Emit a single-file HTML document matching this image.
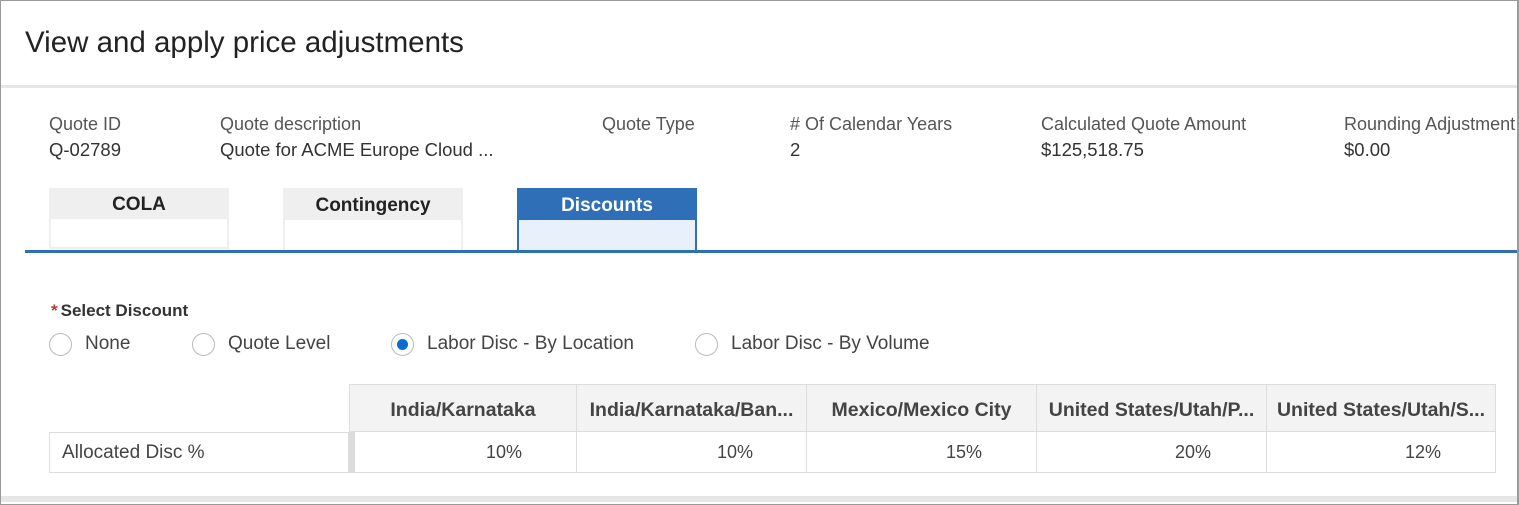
<!DOCTYPE html>
<html><head><style>
*{margin:0;padding:0;box-sizing:border-box}
body{width:1519px;height:505px;overflow:hidden;background:#fff;font-family:"Liberation Sans",sans-serif;color:#333;position:relative}
.a{position:absolute;white-space:nowrap}
.frame{position:absolute;left:0;top:0;width:1519px;height:505px;border:1px solid #9a9a9a;border-right:2px solid #9a9a9a;}
.lbl{font-size:18px;color:#555;top:114px}
.val{font-size:18.5px;color:#333;top:139px}
.tab{position:absolute;top:188px;width:180px;height:62px;background:#efefef;}
.tab .b{position:absolute;left:2px;right:2px;top:31px;bottom:0;background:#fff}
.tab .t{position:absolute;left:0;right:0;top:7px;text-align:center;font-weight:bold;font-size:19px;color:#222}
.radio{position:absolute;top:333px;width:23px;height:23px;border:1px solid #bbb;border-radius:50%;background:#fff}
.rl{font-size:19px;color:#444;top:333px}
.th{position:absolute;top:384px;height:48px;background:#f3f3f3;border:1px solid #ddd;border-left:none;font-weight:bold;font-size:19.5px;color:#444;text-align:center;line-height:50px;overflow:hidden}
.td{position:absolute;top:432px;height:41px;border:1px solid #ddd;border-left:none;border-top:none;font-size:18px;color:#444;line-height:41px}
</style></head><body>
<div class="a" style="left:25px;top:26px;font-size:29.5px;color:#222">View and apply price adjustments</div>
<div class="a" style="left:1px;top:85px;width:1516px;height:3px;background:#e6e6e6"></div>

<div class="a lbl" style="left:49px">Quote ID</div>
<div class="a val" style="left:49px">Q-02789</div>
<div class="a lbl" style="left:220px">Quote description</div>
<div class="a val" style="left:220px">Quote for ACME Europe Cloud ...</div>
<div class="a lbl" style="left:602px">Quote Type</div>
<div class="a lbl" style="left:790px"># Of Calendar Years</div>
<div class="a val" style="left:790px">2</div>
<div class="a lbl" style="left:1041px">Calculated Quote Amount</div>
<div class="a val" style="left:1041px">$125,518.75</div>
<div class="a lbl" style="left:1344px">Rounding Adjustment</div>
<div class="a val" style="left:1344px">$0.00</div>

<div class="tab" style="left:49px;height:61px"><div class="b" style="bottom:2px"></div><div class="t" style="top:6px">COLA</div></div>
<div class="tab" style="left:283px"><div class="b" style="top:32px"></div><div class="t">Contingency</div></div>
<div class="tab" style="left:517px;background:#2e6fb7"><div class="b" style="background:#e8f1fb;top:32px"></div><div class="t" style="color:#fff">Discounts</div></div>
<div class="a" style="left:25px;top:250px;width:1494px;height:3px;background:#2e6fb7"></div>

<div class="a" style="left:51px;top:301px;font-size:17px;font-weight:bold;color:#333"><span style="color:#c23934;margin-right:3px">*</span>Select Discount</div>
<div class="radio" style="left:49px"></div><div class="a rl" style="left:85px">None</div>
<div class="radio" style="left:192px"></div><div class="a rl" style="left:228px">Quote Level</div>
<div class="radio" style="left:391px"><div style="position:absolute;left:5px;top:5px;width:11px;height:11px;border-radius:50%;background:#0b6bd1"></div></div><div class="a rl" style="left:427px">Labor Disc - By Location</div>
<div class="radio" style="left:695px"></div><div class="a rl" style="left:731px">Labor Disc - By Volume</div>

<div class="th" style="left:349px;width:228px;border-left:1px solid #ddd">India/Karnataka</div>
<div class="th" style="left:577px;width:230px">India/Karnataka/Ban...</div>
<div class="th" style="left:807px;width:230px">Mexico/Mexico City</div>
<div class="th" style="left:1037px;width:230px">United States/Utah/P...</div>
<div class="th" style="left:1267px;width:229px">United States/Utah/S...</div>
<div class="td" style="left:49px;width:300px;border-left:1px solid #ddd;border-top:1px solid #ddd;padding-left:12px;line-height:40px;font-size:19px">Allocated Disc %</div>
<div class="a" style="left:349px;top:432px;width:6px;height:41px;background:#dcdcdc"></div>
<div class="td" style="left:355px;width:222px;padding-left:131px">10%</div>
<div class="td" style="left:577px;width:230px;padding-left:140px">10%</div>
<div class="td" style="left:807px;width:230px;padding-left:139px">15%</div>
<div class="td" style="left:1037px;width:230px;padding-left:138px">20%</div>
<div class="td" style="left:1267px;width:229px;padding-left:138px">12%</div>

<div class="a" style="left:1px;top:496px;width:1516px;height:6px;background:#e6e6e6"></div>
<div class="frame"></div>
</body></html>
